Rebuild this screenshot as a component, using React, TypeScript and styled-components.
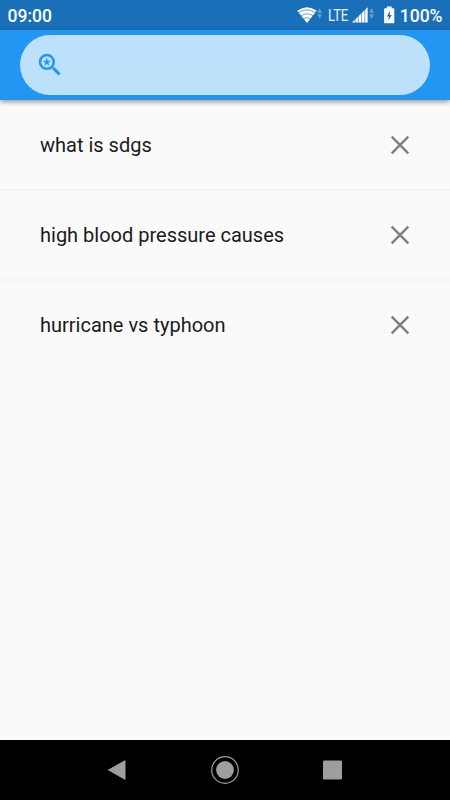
import React from 'react';
import styled, { createGlobalStyle } from 'styled-components';

const GlobalStyle = createGlobalStyle`
  * { box-sizing: border-box; }
  body { margin: 0; font-family: Roboto, sans-serif; }
`;

const Screen = styled.div`
  width: 100%;
  height: 100vh;
  display: flex;
  flex-direction: column;
  overflow: hidden;
  background: #fafafa;
`;

const StatusBar = styled.div`
  height: 30px;
  flex: none;
  display: flex;
  align-items: center;
  justify-content: space-between;
  padding: 2px 7.5px 0;
  background: #1a70b8;
  color: #fff;
`;

const StatusText = styled.span`
  font-size: 17.5px;
  line-height: 28px;
  font-weight: 500;
`;

const StatusGroup = styled.div`
  display: flex;
  align-items: center;
`;

const StatusDrawing = styled.svg`
  display: block;
  flex: none;
  margin-top: -2px;
`;

const NetworkLabel = styled.span`
  width: 24px;
  font-size: 16px;
  line-height: 28px;
  letter-spacing: -0.2px;
  transform: scaleX(0.82);
  transform-origin: left;
  color: #edf4fa;
`;

const SearchBar = styled.header`
  height: 70px;
  flex: none;
  padding: 5px 20px;
  background: #2196f3;
  box-shadow: 0 2px 5px rgba(0, 0, 0, 0.4);
  z-index: 1;
`;

const SearchField = styled.div`
  height: 60px;
  display: flex;
  align-items: center;
  padding-left: 15px;
  border-radius: 30px;
  background: #bde0fb;
`;

const HistoryList = styled.ul`
  flex: 1;
  margin: 0;
  padding: 0;
  list-style: none;
`;

const HistoryRow = styled.li`
  height: 90px;
  display: flex;
  align-items: center;
  justify-content: space-between;
  padding: 0 35px 0 40px;
  & + & { box-shadow: inset 0 1px 0 #f5f5f5, 0 -1px 0 #f5f5f5; }
`;

const Query = styled.span`
  font-size: 20px;
  line-height: 30px;
  color: #1b1b1b;
`;

const RemoveButton = styled.button`
  width: 30px;
  height: 30px;
  padding: 0;
  border: 0;
  background: none;
  svg { display: block; }
`;

const NavBar = styled.nav`
  height: 60px;
  flex: none;
  display: flex;
  align-items: center;
  justify-content: center;
  gap: 77.5px;
  background: #000;
  svg { display: block; }
`;

const queries = ['what is sdgs', 'high blood pressure causes', 'hurricane vs typhoon'];

const StatusIcons = () => (
  <StatusDrawing width="32" height="30" viewBox="296 0 32 30">
    <path d="M297.2 10.7Q307 3.6 316.7 10.7L307 22.9z" fill="#fff" />
    <path d="M298.4 12.8Q307 6.9 315.6 12.8M300.9 15.8Q307 11.8 313.1 15.8M303.5 18.7Q307 16.5 310.5 18.7" fill="none" stroke="#1a70b8" strokeWidth=".65" />
    <path d="M317.2 12.7L319.6 8.2L322 12.7zM317.2 14.3L319.6 18.8L322 14.3z" fill="#68a1d1" />
  </StatusDrawing>
);

const SignalAndBattery = () => (
  <StatusDrawing width="48" height="30" viewBox="352 0 48 30">
    <path d="M352 22.6L367.6 7.2V22.6z" fill="#fff" />
    <path d="M355.2 17V23M358.4 14V23M361.6 11V23M364.8 8V23" stroke="#1a70b8" strokeWidth=".6" />
    <path d="M369.2 12.7L371.6 8.2L374 12.7zM369.2 14.3L371.6 18.8L374 14.3z" fill="#68a1d1" />
    <path d="M386.8 6.5h4.8v1.8h1.8q.9 0 .9.9v13.2q0 .9-.9.9h-8.4q-.9 0-.9-.9V9.2q0-.9.9-.9h1.8z" fill="#fff" />
    <path d="M390.3 10.5L386.8 16.4H388.9L388.4 20.5L391.8 14.9H389.7z" fill="#1a70b8" />
  </StatusDrawing>
);

const SavedSearchIcon = () => (
  <svg width="30" height="30" viewBox="35 50 30 30">
    <circle cx="46.9" cy="61.9" r="6.9" fill="none" stroke="#2196f3" strokeWidth="2.5" />
    <path d="M51.6 66.7L53 68.1" stroke="#2196f3" strokeWidth="2" />
    <path d="M53.2 68.2L59.6 74.4" stroke="#2196f3" strokeWidth="3" />
    <path d="M46.8 57.6L47.8 60.8H51L48.4 62.7L49.4 65.8L46.8 63.9L44.2 65.8L45.2 62.7L42.6 60.8H45.8z" fill="#2196f3" />
  </svg>
);

export default function App() {
  return (
    <Screen>
      <GlobalStyle />
      <StatusBar>
        <StatusText>09:00</StatusText>
        <StatusGroup>
          <StatusIcons />
          <NetworkLabel>LTE</NetworkLabel>
          <SignalAndBattery />
          <StatusText>100%</StatusText>
        </StatusGroup>
      </StatusBar>
      <SearchBar>
        <SearchField><SavedSearchIcon /></SearchField>
      </SearchBar>
      <HistoryList>
        {queries.map((query) => (
          <HistoryRow key={query}>
            <Query>{query}</Query>
            <RemoveButton aria-label="Remove">
              <svg width="30" height="30" viewBox="0 0 30 30">
                <path d="M6.7 6.7L23.3 23.3M23.3 6.7L6.7 23.3" stroke="#7f7f7f" strokeWidth="2.4" />
              </svg>
            </RemoveButton>
          </HistoryRow>
        ))}
      </HistoryList>
      <NavBar>
        <svg width="30" height="30" viewBox="0 0 30 30">
          <path d="M22 5.7V24.3L5.5 15z" fill="#9e9e9e" stroke="#9e9e9e" strokeLinejoin="round" />
        </svg>
        <svg width="30" height="30" viewBox="0 0 30 30">
          <circle cx="15" cy="15" r="13.3" fill="none" stroke="#9e9e9e" strokeWidth="1.2" />
          <circle cx="15" cy="15" r="8.9" fill="#9e9e9e" />
        </svg>
        <svg width="30" height="30" viewBox="0 0 30 30">
          <rect x="5" y="5.5" width="19" height="19" rx="1.3" fill="#9e9e9e" />
        </svg>
      </NavBar>
    </Screen>
  );
}
